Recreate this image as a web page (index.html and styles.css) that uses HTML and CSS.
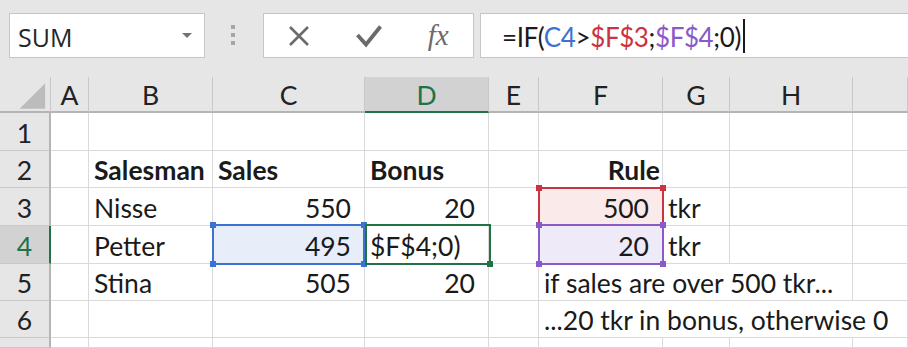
FILE: index.html
```html
<!DOCTYPE html>
<html>
<head>
<meta charset="utf-8">
<link rel="stylesheet" href="styles.css">
</head>
<body>
<div class="toolbar">
  <div class="namebox"><span class="name">SUM</span><span class="caret"></span></div>
  <div class="grip"><i></i><i></i><i></i></div>
  <div class="fbuttons">
    <span class="slot"><svg width="22" height="22" viewBox="0 0 22 22"><path d="M2 2 L20 20 M20 2 L2 20" stroke="#6b6b6b" stroke-width="2.6" fill="none"/></svg></span>
    <span class="slot"><svg width="26" height="24" viewBox="0 0 26 24"><path d="M1.5 11 L10 20.5 L24.5 2.5" stroke="#6b6b6b" stroke-width="3.8" fill="none"/></svg></span>
    <span class="slot"><span class="fx">fx</span></span>
  </div>
  <div class="formula"><span class="ftext">=IF(<span class="rb">C4</span>&gt;<span class="rr">$F$3</span>;<span class="rp">$F$4</span>;0)</span><span class="cursor"></span></div>
</div>
<div class="sheet">
  <div class="hd corner"><svg width="51" height="36" viewBox="0 0 51 36"><polygon points="20,32 46,6 46,32" fill="#bcbcbc"/></svg></div>
  <div class="hd">A</div>
  <div class="hd">B</div>
  <div class="hd">C</div>
  <div class="hd hsel">D</div>
  <div class="hd">E</div>
  <div class="hd">F</div>
  <div class="hd">G</div>
  <div class="hd">H</div>
  <div class="hd"></div>

  <div class="rh">1</div>
  <div class="c"></div><div class="c"></div><div class="c"></div><div class="c"></div><div class="c"></div><div class="c"></div><div class="c"></div><div class="c"></div><div class="c"></div>

  <div class="rh">2</div>
  <div class="c"></div>
  <div class="c b">Salesman</div>
  <div class="c b">Sales</div>
  <div class="c b">Bonus</div>
  <div class="c"></div>
  <div class="c b rule">Rule</div>
  <div class="c"></div><div class="c"></div><div class="c"></div>

  <div class="rh">3</div>
  <div class="c"></div>
  <div class="c">Nisse</div>
  <div class="c num">550</div>
  <div class="c num">20</div>
  <div class="c"></div>
  <div class="c num fill-red">500</div>
  <div class="c">tkr</div>
  <div class="c"></div><div class="c"></div>

  <div class="rh rsel">4</div>
  <div class="c"></div>
  <div class="c">Petter</div>
  <div class="c num fill-blue">495</div>
  <div class="c">$F$4;0)</div>
  <div class="c"></div>
  <div class="c num fill-purple">20</div>
  <div class="c">tkr</div>
  <div class="c"></div><div class="c"></div>

  <div class="rh">5</div>
  <div class="c"></div>
  <div class="c">Stina</div>
  <div class="c num">505</div>
  <div class="c num">20</div>
  <div class="c"></div>
  <div class="c span3">if sales are over 500 tkr...</div>
  <div class="c"></div>

  <div class="rh">6</div>
  <div class="c"></div><div class="c"></div><div class="c"></div><div class="c"></div><div class="c"></div>
  <div class="c span4">...20 tkr in bonus, otherwise 0</div>

  <div class="rh"></div>
  <div class="c"></div><div class="c"></div><div class="c"></div><div class="c"></div><div class="c"></div><div class="c"></div><div class="c"></div><div class="c"></div><div class="c"></div>

  <div class="sel sel-blue"><i class="h tl"></i><i class="h tr"></i><i class="h bl"></i><i class="h br"></i></div>
  <div class="sel sel-green"><i class="h br"></i></div>
  <div class="sel sel-red"><i class="h tl"></i><i class="h tr"></i><i class="h bl"></i><i class="h br"></i></div>
  <div class="sel sel-purple"><i class="h tl"></i><i class="h tr"></i><i class="h bl"></i><i class="h br"></i></div>
</div>
</body>
</html>
```
FILE: styles.css
```css
* { box-sizing: border-box; margin: 0; padding: 0; }
body {
  margin: 0;
  width: 908px;
  height: 348px;
  overflow: hidden;
  background: #fff;
  font-family: Lato, "Liberation Sans", sans-serif;
  color: #1a1a1a;
}

/* ---------- toolbar ---------- */
.toolbar {
  height: 77px;
  background: #e6e6e6;
  display: flex;
  align-items: flex-start;
  padding: 13px 0 0 9px;
}
.namebox {
  width: 196px;
  height: 45px;
  background: #fff;
  border: 1px solid #c6c6c6;
  display: flex;
  align-items: center;
  justify-content: space-between;
  padding: 2px 12px 0 8px;
}
.name {
  font-family: "Open Sans", "Noto Sans", sans-serif;
  font-size: 25px;
  color: #262626;
}
.caret {
  width: 0;
  height: 0;
  border-left: 5px solid transparent;
  border-right: 5px solid transparent;
  border-top: 5px solid #737373;
  margin-bottom: 2px;
}
.grip {
  width: 58px;
  height: 45px;
  display: flex;
  flex-direction: column;
  gap: 4px;
  padding: 12px 0 0 26px;
}
.grip i {
  display: block;
  width: 4px;
  height: 4px;
  background: #a6a6a6;
}
.fbuttons {
  width: 211px;
  height: 45px;
  background: #fff;
  border: 1px solid #c6c6c6;
  display: flex;
  align-items: center;
}
.slot {
  width: 70px;
  height: 43px;
  display: flex;
  align-items: center;
  justify-content: center;
}
.fx {
  font-family: "Liberation Serif", serif;
  font-style: italic;
  font-size: 29px;
  color: #6b6b6b;
  line-height: 1;
}
.formula {
  flex: 1;
  margin-left: 6px;
  margin-right: -2px;
  height: 45px;
  background: #fff;
  border: 1px solid #c6c6c6;
  display: flex;
  align-items: center;
  padding: 2px 0 0 21px;
  font-size: 26px;
}
.ftext { color: #1a1a1a; white-space: nowrap; letter-spacing: -0.4px; }
.rb { color: #3c72d0; }
.rr { color: #cc3340; }
.rp { color: #8a5ac8; }
.cursor {
  width: 2px;
  height: 34px;
  background: #1a1a1a;
  margin: -2px 0 0 2px;
}

/* ---------- sheet ---------- */
.sheet {
  position: relative;
  display: grid;
  grid-template-columns: 51px 38px 124px 152px 124px 50px 124px 67px 123px 1fr;
  grid-template-rows: 36px 38px 37px 38px 38px 37px 37px 10px;
  font-size: 26.5px;
}
.hd {
  background: #e6e6e6;
  border-right: 1px solid #c8c8c8;
  border-bottom: 2px solid #b4b4b4;
  display: flex;
  align-items: flex-end;
  justify-content: center;
  padding-bottom: 1px;
  line-height: 30px;
  color: #222;
}
.corner { padding: 0; align-items: stretch; }
.hsel {
  background: #d2d2d2;
  color: #217346;
  border-bottom-color: #217346;
}
.rh {
  background: #e6e6e6;
  border-right: 2px solid #b4b4b4;
  border-bottom: 1px solid #c8c8c8;
  display: flex;
  align-items: flex-end;
  justify-content: center;
  padding-bottom: 2px;
  line-height: 30px;
  color: #222;
}
.rsel {
  background: #d2d2d2;
  color: #217346;
  border-right-color: #217346;
}
.c {
  border-right: 1px solid #dadada;
  border-bottom: 1px solid #dadada;
  display: flex;
  align-items: flex-end;
  padding: 0 4px 2px 5px;
  line-height: 30px;
  white-space: nowrap;
  overflow: hidden;
  color: #1a1a1a;
}
.b { font-weight: 700; }
.num { justify-content: flex-end; padding-right: 13px; }
.rule { justify-content: flex-end; padding-right: 2px; }
.span3 { grid-column: span 3; }
.span4 { grid-column: span 4; }
.fill-blue { background: #e8eef9; }
.fill-red { background: #fbeaea; }
.fill-purple { background: #efeaf8; }

/* ---------- reference outlines (overlays) ---------- */
.sel {
  position: absolute;
  border: 2px solid currentColor;
}
.sel-blue { color: #3c72d0; left: 212px; top: 147px; width: 153px; height: 41px; }
.sel-green { color: #217346; left: 365px; top: 147px; width: 126px; height: 41px; }
.sel-red { color: #cc3340; left: 538px; top: 110px; width: 126px; height: 39px; }
.sel-purple { color: #8a5ac8; left: 538px; top: 147px; width: 126px; height: 41px; }
.h {
  position: absolute;
  width: 6px;
  height: 6px;
  background: currentColor;
}
.tl { left: -4px; top: -4px; }
.tr { right: -4px; top: -4px; }
.bl { left: -4px; bottom: -4px; }
.br { right: -4px; bottom: -4px; }
```
